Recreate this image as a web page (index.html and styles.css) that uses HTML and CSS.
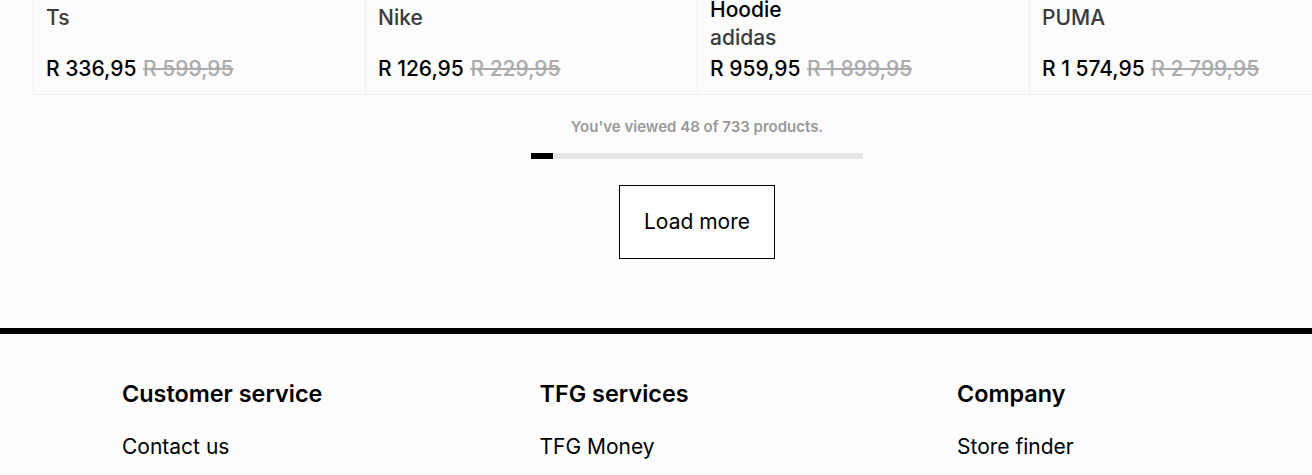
FILE: index.html
```html
<!DOCTYPE html>
<html lang="en">
<head>
<meta charset="utf-8">
<title>Products</title>
<link rel="stylesheet" href="styles.css">
</head>
<body>
<main class="page">
  <section class="products">
    <div class="grid">
      <article class="card">
        <div class="brand brand-solo">Ts</div>
        <div class="price"><span class="now">R 336,95</span> <s class="was">R 599,95</s></div>
      </article>
      <article class="card">
        <div class="brand brand-solo">Nike</div>
        <div class="price"><span class="now">R 126,95</span> <s class="was">R 229,95</s></div>
      </article>
      <article class="card">
        <div class="title">Hoodie</div>
        <div class="brand">adidas</div>
        <div class="price"><span class="now">R 959,95</span> <s class="was">R 1 899,95</s></div>
      </article>
      <article class="card">
        <div class="brand brand-solo">PUMA</div>
        <div class="price"><span class="now">R 1 574,95</span> <s class="was">R 2 799,95</s></div>
      </article>
    </div>
    <div class="pager">
      <p class="viewed">You've viewed 48 of 733 products.</p>
      <div class="bar"><div class="fill" style="width:22px"></div></div>
      <button class="load" type="button">Load more</button>
    </div>
  </section>
  <footer class="footer">
    <div class="cols">
      <div class="col">
        <h3>Customer service</h3>
        <a href="#">Contact us</a>
      </div>
      <div class="col">
        <h3>TFG services</h3>
        <a href="#">TFG Money</a>
      </div>
      <div class="col">
        <h3>Company</h3>
        <a href="#">Store finder</a>
      </div>
      <div class="col"></div>
    </div>
  </footer>
</main>
</body>
</html>
```
FILE: styles.css
```css
* { box-sizing: border-box; }
html, body {
  margin: 0;
  padding: 0;
  background: #fcfcfc;
  overflow: hidden;
}
body {
  font-family: Inter, "Noto Sans", sans-serif;
  color: #000;
}
.page {
  width: 1312px;
  overflow: hidden;
}
.products {
  width: 1361px;
  padding-left: 33px;
  display: flex;
  flex-direction: column;
}
.grid {
  display: grid;
  grid-template-columns: repeat(4, 332px);
}
.card {
  height: 95px;
  border-left: 1px solid #efefef;
  border-bottom: 1px solid #efefef;
  padding: 0 12px 11px;
  display: flex;
  flex-direction: column;
  justify-content: flex-end;
  overflow: hidden;
  font-size: 21px;
  line-height: 28px;
  font-weight: 500;
}
.title { color: #000; }
.brand { color: #3a3a3a; margin-bottom: 3px; }
.brand.brand-solo { margin-bottom: 23px; }
.price { white-space: nowrap; }
.now { color: #000; }
.was { color: #ababab; margin-left: 1px; }
.pager {
  display: flex;
  flex-direction: column;
  align-items: center;
  width: 1328px;
}
.viewed {
  margin: 22px 0 0;
  font-size: 15px;
  line-height: 20px;
  font-weight: 600;
  color: #999;
}
.bar {
  margin-top: 16px;
  width: 332px;
  height: 6px;
  background: #e6e6e6;
}
.fill {
  height: 100%;
  background: #000;
}
.load {
  margin-top: 26px;
  width: 156px;
  height: 74px;
  border: 1px solid #000;
  background: #fff;
  font-family: Inter, "Noto Sans", sans-serif;
  font-size: 21px;
  font-weight: 400;
  color: #000;
  padding: 0 0 2px;
}
.footer {
  margin-top: 69px;
  border-top: 6px solid #000;
  padding: 46px 0 0 122px;
}
.cols {
  display: grid;
  grid-template-columns: repeat(4, 417.5px);
}
.col h3 {
  margin: 0;
  font-size: 23.4px;
  line-height: 28px;
  font-weight: 600;
}
.col a {
  display: block;
  margin-top: 25px;
  font-size: 21px;
  line-height: 28px;
  font-weight: 400;
  color: #000;
  text-decoration: none;
}
```
